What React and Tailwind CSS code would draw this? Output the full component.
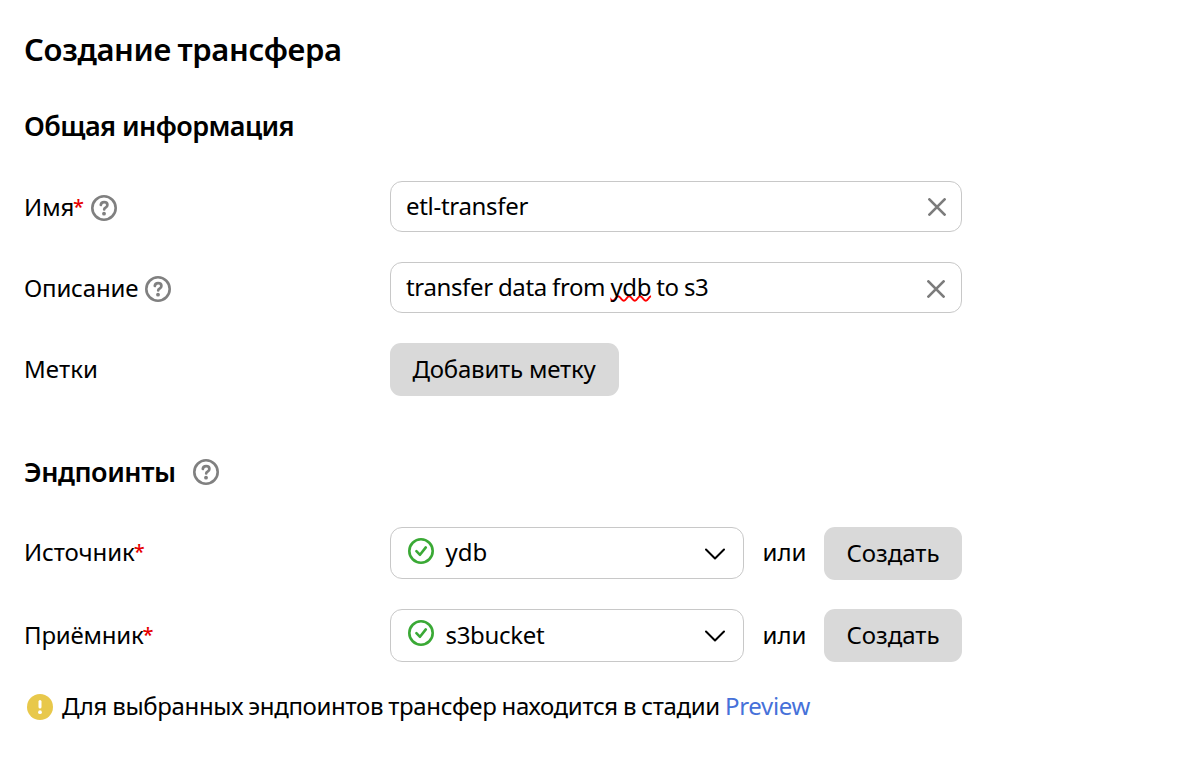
function HelpIcon() {
  return (
    <svg className="block h-[26px] w-[26px] shrink-0" viewBox="0 0 26 26" fill="none" stroke="#808080" strokeLinecap="round" strokeLinejoin="round">
      <circle cx="13" cy="13" r="11.7" strokeWidth="2.6" />
      <path d="M9.8 10C10 8.2 11.3 7.2 13.1 7.2c1.9 0 3.3 1.1 3.3 2.8 0 1.4-.8 2.1-1.8 2.7-.9.6-1.4 1-1.4 1.7" strokeWidth="2.7" />
      <circle cx="13" cy="18.7" r="1.9" fill="#808080" stroke="none" />
    </svg>
  );
}

function ClearIcon({ className }) {
  return (
    <svg className={`block h-[18px] w-[18px] ${className}`} viewBox="0 0 18 18" fill="none" stroke="#7c7c7c" strokeWidth="2.7" strokeLinecap="round">
      <path d="M1.4 1.4l15.2 15.2M16.6 1.4L1.4 16.6" />
    </svg>
  );
}

function CheckIcon() {
  return (
    <svg className="block h-[26px] w-[26px] shrink-0" viewBox="0 0 26 26" fill="none" stroke="#3aa935" strokeWidth="2.6" strokeLinecap="round" strokeLinejoin="round">
      <circle cx="13" cy="13" r="11.7" />
      <path d="M8.4 13.2l3.6 3.6 5.8-7.4" />
    </svg>
  );
}

function ChevronIcon({ className }) {
  return (
    <svg className={`block h-3 w-5 ${className}`} viewBox="0 0 20 12" fill="none" stroke="#000" strokeWidth="2" strokeLinecap="round" strokeLinejoin="round">
      <path d="M1 1.5l9 9 9-9" />
    </svg>
  );
}

function WarningIcon() {
  return (
    <svg className="block h-[26px] w-[26px] shrink-0" viewBox="0 0 26 26">
      <circle cx="13" cy="13" r="13" fill="#e8c84b" />
      <path d="M13 7.5v5.5" stroke="#fff" strokeWidth="3" strokeLinecap="round" />
      <circle cx="13" cy="18.2" r="1.9" fill="#fff" />
    </svg>
  );
}

function Required({ className }) {
  return <span className={`text-[20px] font-medium text-[#e60000] ${className}`}>*</span>;
}

function Button({ children, className }) {
  return (
    <button className={`flex h-[53px] items-center justify-center rounded-[11px] bg-[#d9d9d9] pb-0.5 ${className}`}>{children}</button>
  );
}

function TextField({ children, className, iconClass = "" }) {
  return (
    <div className={`flex h-[51px] w-[572px] items-center justify-between rounded-[12px] border border-[#c8c8c8] bg-white pl-[15px] ${className}`}>
      <span className="pb-px whitespace-pre">{children}</span>
      <ClearIcon className={iconClass} />
    </div>
  );
}

function EndpointSelect({ value, valueClass = "", chevronClass = "", className }) {
  return (
    <div className={`flex w-[354px] items-center rounded-[12px] border border-[#c8c8c8] bg-white pl-[17px] pr-[18px] ${className}`}>
      <div className="-mt-[5px]">
        <CheckIcon />
      </div>
      <span className={`ml-[11.5px] flex-1 pb-0.5 ${valueClass}`}>{value}</span>
      <ChevronIcon className={chevronClass} />
    </div>
  );
}

export default function App() {
  return (
    <main className="flex h-[758px] w-[1198px] flex-col overflow-hidden bg-white pl-6 font-['Noto_Sans',sans-serif] text-[24px] leading-[34px] text-black">
      <h1 className="mt-[27px] h-[45px] text-[31px] leading-[44px] font-semibold tracking-[-0.37px] [word-spacing:-1px]">Создание трансфера</h1>
      <h2 className="mt-[34px] h-[40px] text-[27px] leading-[40px] font-semibold tracking-[-0.57px]">Общая информация</h2>

      <section className="mt-[35px] flex flex-col">
        <div className="flex h-[51px] items-center">
          <label className="flex w-[366px] items-center">
            <span>Имя</span>
            <Required className="-ml-[1.5px]" />
            <span className="ml-[7px] mt-[3px]"><HelpIcon /></span>
          </label>
          <TextField className="pr-[15px] tracking-[-0.3px]">etl-transfer</TextField>
        </div>
        <div className="mt-[30px] flex h-[51px] items-center">
          <label className="flex w-[366px] items-center">
            <span className="tracking-[-0.2px]">Описание</span>
            <span className="ml-[7px] mt-[3px]"><HelpIcon /></span>
          </label>
          <TextField className="pr-[16px] tracking-[-0.36px] [word-spacing:-0.7px]" iconClass="mt-0.5">
            transfer data from <span className="underline decoration-[#ff0000] decoration-wavy decoration-[1.6px] underline-offset-[-1px] [text-decoration-skip-ink:none]">ydb</span> to s3
          </TextField>
        </div>
        <div className="mt-[30px] flex h-[53px] items-center">
          <span className="w-[366px] pb-0.5 tracking-[0.1px]">Метки</span>
          <Button className="w-[229px] pr-px tracking-[-0.2px]">Добавить метку</Button>
        </div>
      </section>

      <div className="mt-[56px] flex h-10 items-center">
        <h2 className="text-[27px] leading-[40px] font-semibold tracking-[-0.45px]">Эндпоинты</h2>
        <span className="ml-[17px]"><HelpIcon /></span>
      </div>

      <section className="mt-[35px] flex flex-col">
        <div className="flex h-[53px] items-start">
          <span className="mt-2 flex w-[366px] items-center"><span className="tracking-[-0.1px]">Источник</span><Required className="-ml-px" /></span>
          <EndpointSelect value="ydb" chevronClass="mt-0.5" className="h-[52px]" />
          <span className="ml-[18.5px] mt-2 w-[61.5px]">или</span>
          <Button className="w-[138px]">Создать</Button>
        </div>
        <div className="mt-[29px] flex h-[53px] items-start">
          <span className="mt-[9px] flex w-[366px] items-center"><span className="tracking-[-0.2px]">Приёмник</span><Required className="-ml-px" /></span>
          <EndpointSelect value="s3bucket" valueClass="tracking-[-0.3px]" className="h-[53px]" />
          <span className="ml-[18.5px] mt-[9px] w-[61.5px]">или</span>
          <Button className="w-[138px]">Создать</Button>
        </div>
      </section>

      <div className="mt-[27px] flex h-[34px] items-center pl-[3px]">
        <span className="mt-0.5"><WarningIcon /></span>
        <span className="ml-[9px] tracking-[-0.35px] whitespace-pre [word-spacing:-0.7px]">
          Для выбранных эндпоинтов трансфер находится в стадии <a className="text-[#4671d9]">Preview</a>
        </span>
      </div>
    </main>
  );
}
